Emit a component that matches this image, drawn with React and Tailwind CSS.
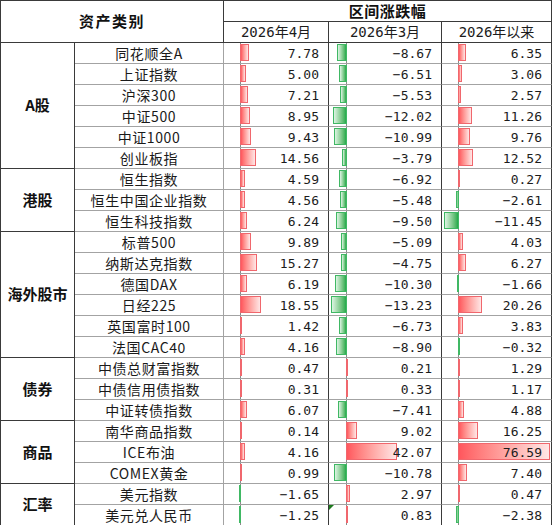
import React from 'react';

const groups = [
  {
    name: 'A股',
    rows: [
      ['同花顺全A', 7.78, -8.67, 6.35],
      ['上证指数', 5.0, -6.51, 3.06],
      ['沪深300', 7.21, -5.53, 2.57],
      ['中证500', 8.95, -12.02, 11.26],
      ['中证1000', 9.43, -10.99, 9.76],
      ['创业板指', 14.56, -3.79, 12.52],
    ],
  },
  {
    name: '港股',
    rows: [
      ['恒生指数', 4.59, -6.92, 0.27],
      ['恒生中国企业指数', 4.56, -5.48, -2.61],
      ['恒生科技指数', 6.24, -9.5, -11.45],
    ],
  },
  {
    name: '海外股市',
    rows: [
      ['标普500', 9.89, -5.09, 4.03],
      ['纳斯达克指数', 15.27, -4.75, 6.27],
      ['德国DAX', 6.19, -10.3, -1.66],
      ['日经225', 18.55, -13.23, 20.26],
      ['英国富时100', 1.42, -6.73, 3.83],
      ['法国CAC40', 4.16, -8.9, -0.32],
    ],
  },
  {
    name: '债券',
    rows: [
      ['中债总财富指数', 0.47, 0.21, 1.29],
      ['中债信用债指数', 0.31, 0.33, 1.17],
      ['中证转债指数', 6.07, -7.41, 4.88],
    ],
  },
  {
    name: '商品',
    rows: [
      ['南华商品指数', 0.14, 9.02, 16.25],
      ['ICE布油', 4.16, 42.07, 76.59],
      ['COMEX黄金', 0.99, -10.78, 7.4],
    ],
  },
  {
    name: '汇率',
    rows: [
      ['美元指数', -1.65, 2.97, 0.47],
      ['美元兑人民币', -1.25, 0.83, -2.38],
    ],
  },
];

const spans = { 2: 'row-span-2', 3: 'row-span-3', 6: 'row-span-6' };

// axis offset inside each data cell, px per unit for positive / negative bars
const cols = [
  { axis: 16, axisCls: 'left-[16px]', pos: 1.13, neg: 1.5 },
  { axis: 17, axisCls: 'left-[17px]', pos: 1.22, neg: 1.2 },
  { axis: 16, axisCls: 'left-[16px]', pos: 1.2, neg: 1.27 },
];

const dark = 'border-[#3a3a3a]';
const numFont = "font-['DejaVu_Sans_Mono','Noto_Sans_CJK_SC',monospace]";
const cjkFont = "font-['Noto_Sans_CJK_SC',sans-serif]";

const fmt = (v) => (v < 0 ? '\u2212' + Math.abs(v).toFixed(2) : v.toFixed(2));

const DataCell = ({ v, col, flag }) => {
  const c = cols[col];
  const w = Math.max(1, Math.round(Math.abs(v) * (v < 0 ? c.neg : c.pos)));
  const left = v < 0 ? c.axis + 1 - w : c.axis;
  return (
    <div className={`relative border-r border-b border-b-[#a3a3a3] ${dark}`}>
      <div className={`absolute top-0 bottom-0 ${c.axisCls} w-px bg-[#8a8a8a]`} />
      {v < 0 ? (
        <div
          className="absolute top-[1px] h-[17px] bg-linear-to-r from-[#dcf4e3] to-[#1faa4a] border border-[#40b864]"
          style={{ left, width: w }}
        />
      ) : (
        <div
          className="absolute top-[1px] h-[17px] bg-linear-to-r from-[#ff565d] to-[#ffe6e6] border border-[#f0676d]"
          style={{ left, width: w }}
        />
      )}
      {flag && (
        <div className="absolute top-0 left-0 w-0 h-0 border-t-[5px] border-r-[5px] border-t-[#1d7a1d] border-r-transparent" />
      )}
      <div className={`relative flex h-full items-center justify-end pr-[9px] text-[13px] leading-none text-[#1c1c1c] ${numFont}`}>
        {fmt(v)}
      </div>
    </div>
  );
};

const App = () => {
  return (
    <div className="w-[553px] h-[525px] overflow-hidden bg-white">
      <div className={`grid w-[552px] grid-cols-[74px_149px_105px_113px_110px] auto-rows-[21px] border-l border-t ${dark}`}>
        {/* header */}
        <div className={`col-span-2 row-span-2 flex items-center justify-center border-r border-b ${dark} text-[15px] font-bold tracking-[1.5px] text-[#111] ${cjkFont}`}>
          资产类别
        </div>
        <div className={`col-span-3 flex items-center justify-center border-r border-b ${dark} text-[15px] font-bold tracking-[0.5px] text-[#111] ${cjkFont}`}>
          区间涨跌幅
        </div>
        {['2026年4月', '2026年3月', '2026年以来'].map((h) => (
          <div
            key={h}
            className={`flex items-center justify-center border-r border-b ${dark} text-[14px] leading-none text-[#1c1c1c] ${numFont}`}
          >
            {h}
          </div>
        ))}

        {/* body */}
        {groups.map((g) =>
          g.rows.map((r, i) => (
            <React.Fragment key={r[0]}>
              {i === 0 && (
                <div className={`col-start-1 ${spans[g.rows.length]} flex items-center justify-center border-r border-b ${dark} text-[15px] font-bold text-[#111] ${cjkFont}`}>
                  {g.name}
                </div>
              )}
              <div className={`col-start-2 flex items-center justify-center border-r border-b border-[#a3a3a3] text-[14px] leading-none tracking-[0.6px] text-[#1a1a1a] ${cjkFont}`}>
                {r[0]}
              </div>
              <DataCell v={r[1]} col={0} />
              <DataCell v={r[2]} col={1} flag={r[0] === '美元兑人民币'} />
              <DataCell v={r[3]} col={2} />
            </React.Fragment>
          ))
        )}
      </div>
    </div>
  );
};

export default App;
